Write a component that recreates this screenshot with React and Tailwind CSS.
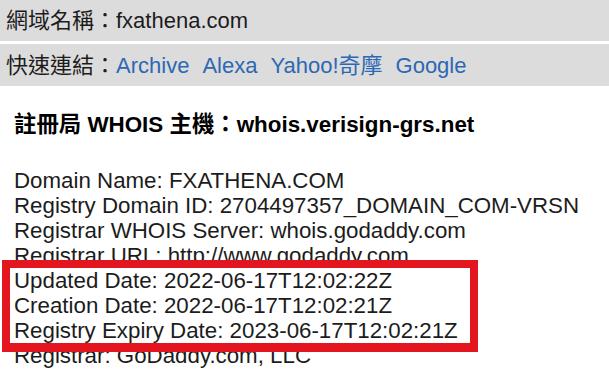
import React from "react";

const links = ["Archive", "Alexa", "Yahoo!奇摩", "Google"];

const whoisLines = [
  "Domain Name: FXATHENA.COM",
  "Registry Domain ID: 2704497357_DOMAIN_COM-VRSN",
  "Registrar WHOIS Server: whois.godaddy.com",
  "Registrar URL: http://www.godaddy.com",
  "Updated Date: 2022-06-17T12:02:22Z",
  "Creation Date: 2022-06-17T12:02:21Z",
  "Registry Expiry Date: 2023-06-17T12:02:21Z",
  "Registrar: GoDaddy.com, LLC",
];

const App = () => {
  return (
    <div className="w-[609px] h-[392px] overflow-hidden bg-white text-[#1c1c1c] font-['Liberation_Sans','Noto_Sans_CJK_TC',sans-serif] text-[22px] leading-[25px]">
      {/* domain name row */}
      <div className="h-[41px] bg-[#dcdcdc] flex items-center pl-[6px]">
        <span>網域名稱：fxathena.com</span>
      </div>

      {/* quick links row */}
      <div className="mt-[3px] h-[42px] bg-[#dcdcdc] flex items-center pl-[6px]">
        <span>快速連結：</span>
        {links.map((l) => (
          <a key={l} href="#" className="text-[#2d68b3] mr-[13px]">
            {l}
          </a>
        ))}
      </div>

      {/* whois server */}
      <h2 className="mt-[26px] pl-[14px] font-bold text-black text-[22.4px]">
        註冊局 WHOIS 主機：whois.verisign-grs.net
      </h2>

      <div className="relative mt-[31px] text-[22.3px]">
        <div className="pl-[14px]">
          {whoisLines.map((line) => (
            <div key={line} className="whitespace-nowrap">
              {line}
            </div>
          ))}
        </div>
        {/* highlight box */}
        <div className="absolute left-[2px] top-[92px] w-[476px] h-[92px] border-[8px] border-b-[9px] border-[#e3161f]" />
      </div>
    </div>
  );
};

export default App;
